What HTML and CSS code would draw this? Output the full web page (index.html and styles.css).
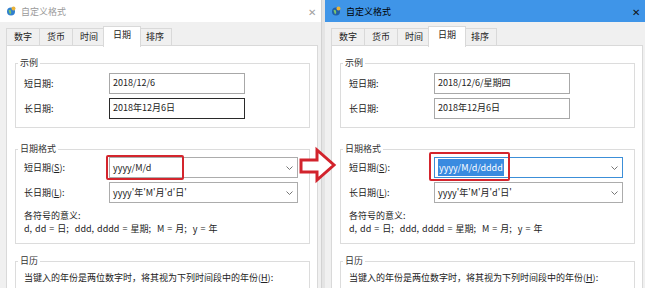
FILE: index.html
```html
<!DOCTYPE html>
<html lang="zh-CN">
<head>
    <meta charset="UTF-8">
    <title>自定义格式</title>
    <link rel="stylesheet" href="styles.css">
</head>
<body>
<div class="screen">
    <div class="window window-left">
        <div class="titlebar">
            <svg class="app-icon" viewBox="0 0 10 10"><circle cx="5" cy="5.5" r="4" fill="#2f7fd0"/><path d="M2.5 4.5 Q4 3 5 5 Q6 7 4 8.5" fill="#7cc36a"/><circle cx="7.5" cy="2.5" r="2" fill="#e9b33a"/></svg>
            <span class="title">自定义格式</span>
            <span class="close">✕</span>
        </div>
        <div class="tabs">
            <span class="tab">数字</span>
            <span class="tab">货币</span>
            <span class="tab">时间</span>
            <span class="tab tab-active">日期</span>
            <span class="tab tab-last">排序</span>
        </div>
        <div class="panel">
            <fieldset class="group">
                <legend>示例</legend>
                <div class="row first">
                    <span class="label">短日期:</span>
                    <div class="textbox">2018/12/6</div>
                </div>
                <div class="row">
                    <span class="label">长日期:</span>
                    <div class="textbox focused">2018年12月6日</div>
                </div>
            </fieldset>
            <fieldset class="group group-format">
                <legend>日期格式</legend>
                <div class="row first-combo">
                    <span class="label">短日期(<u>S</u>):</span>
                    <div class="combo">
                        <span class="value">yyyy/M/d</span>
                        <svg class="chevron" viewBox="0 0 7 4"><path d="M0.5 0.5 L3.5 3.5 L6.5 0.5" fill="none" stroke="#666" stroke-width="0.9"/></svg>
                        <span class="mark mark-left"></span>
                    </div>
                </div>
                <div class="row">
                    <span class="label">长日期(<u>L</u>):</span>
                    <div class="combo">
                        <span class="value">yyyy'年'M'月'd'日'</span>
                        <svg class="chevron" viewBox="0 0 7 4"><path d="M0.5 0.5 L3.5 3.5 L6.5 0.5" fill="none" stroke="#666" stroke-width="0.9"/></svg>
                    </div>
                </div>
                <div class="notes">
                    <div>各符号的意义:</div>
                    <div class="legend-line">d, dd = 日;&nbsp; ddd, dddd = 星期;&nbsp; M = 月;&nbsp; y = 年</div>
                </div>
            </fieldset>
            <fieldset class="group group-calendar">
                <legend>日历</legend>
                <div class="notes calendar-text">当键入的年份是两位数字时，将其视为下列时间段中的年份(<u>H</u>):</div>
            </fieldset>
        </div>
    </div>

    <div class="window window-right">
        <div class="titlebar">
            <svg class="app-icon" viewBox="0 0 10 10"><circle cx="5" cy="5.5" r="4" fill="#1f5fa8"/><path d="M2.5 4.5 Q4 3 5 5 Q6 7 4 8.5" fill="#7cc36a"/><circle cx="7.5" cy="2.5" r="2" fill="#e9b33a"/></svg>
            <span class="title">自定义格式</span>
            <span class="close">✕</span>
        </div>
        <div class="tabs">
            <span class="tab">数字</span>
            <span class="tab">货币</span>
            <span class="tab">时间</span>
            <span class="tab tab-active">日期</span>
            <span class="tab tab-last">排序</span>
        </div>
        <div class="panel">
            <fieldset class="group">
                <legend>示例</legend>
                <div class="row first">
                    <span class="label">短日期:</span>
                    <div class="textbox">2018/12/6/星期四</div>
                </div>
                <div class="row">
                    <span class="label">长日期:</span>
                    <div class="textbox">2018年12月6日</div>
                </div>
            </fieldset>
            <fieldset class="group group-format">
                <legend>日期格式</legend>
                <div class="row first-combo">
                    <span class="label">短日期(<u>S</u>):</span>
                    <div class="combo combo-focus">
                        <span class="value"><span class="selected">yyyy/M/d/dddd</span></span>
                        <svg class="chevron" viewBox="0 0 7 4"><path d="M0.5 0.5 L3.5 3.5 L6.5 0.5" fill="none" stroke="#666" stroke-width="0.9"/></svg>
                        <span class="mark mark-right"></span>
                    </div>
                </div>
                <div class="row">
                    <span class="label">长日期(<u>L</u>):</span>
                    <div class="combo">
                        <span class="value">yyyy'年'M'月'd'日'</span>
                        <svg class="chevron" viewBox="0 0 7 4"><path d="M0.5 0.5 L3.5 3.5 L6.5 0.5" fill="none" stroke="#666" stroke-width="0.9"/></svg>
                    </div>
                </div>
                <div class="notes">
                    <div>各符号的意义:</div>
                    <div class="legend-line">d, dd = 日;&nbsp; ddd, dddd = 星期;&nbsp; M = 月;&nbsp; y = 年</div>
                </div>
            </fieldset>
            <fieldset class="group group-calendar">
                <legend>日历</legend>
                <div class="notes calendar-text">当键入的年份是两位数字时，将其视为下列时间段中的年份(<u>H</u>):</div>
            </fieldset>
        </div>
    </div>

    <!-- arrow between the two dialogs -->
    <svg class="arrow" viewBox="0 0 40 38">
        <path d="M3 14 H19 V4 L36 19 L19 34 V26 H3 Z" fill="#fff" stroke="#d2232c" stroke-width="3" stroke-linejoin="miter"/>
    </svg>
</div>
</body>
</html>
```

FILE: styles.css
```css
* {
    box-sizing: border-box;
}
body {
    margin: 0;
    width: 645px;
    height: 288px;
    overflow: hidden;
    font-family: "Noto Sans CJK SC", sans-serif;
    font-size: 9px;
    color: #222;
    background: #e4e4e4;
}
.screen {
    position: relative;
    display: flex;
    height: 288px;
}
.window {
    background: #f0f0f0;
    overflow: hidden;
}
.window-left {
    width: 322px;
    border-right: 1px solid #d2d2d2;
}
.window-right {
    width: 320px;
    margin-left: 3px;
}
.titlebar {
    height: 22px;
    display: flex;
    align-items: center;
    padding: 0 5px 0 6px;
    background: #fff;
}
.window-right .titlebar {
    background: #3f95e8;
}
.app-icon {
    width: 10px;
    height: 10px;
    margin-right: 5px;
}
.title {
    flex: 1;
    color: #9a9a9a;
}
.window-right .title {
    color: #000;
}
.close {
    font-size: 10px;
    color: #a0a0a0;
}
.window-right .close {
    color: #111;
}
.tabs {
    display: flex;
    height: 23px;
    padding: 6px 0 0 6px;
}
.tab {
    position: relative;
    width: 33px;
    height: 17px;
    line-height: 15px;
    text-align: center;
    border: 1px solid #d9d9d9;
    border-right: none;
    border-bottom: none;
    background: #f0f0f0;
}
.tab-last {
    border-right: 1px solid #d9d9d9;
}
.tab-active {
    z-index: 1;
    width: 38px;
    height: 21px;
    margin: -2px -2px 0 -2px;
    line-height: 16px;
    background: #fff;
    border-right: 1px solid #d9d9d9;
}
.tab-active + .tab {
    border-left: none;
}
.panel {
    height: 270px;
    margin: 0 3px 0 6px;
    padding: 10px 7px 0 8px;
    background: #fff;
    border: 1px solid #d9d9d9;
}
.window-right .panel {
    margin-right: 2px;
}
.group {
    margin: 0;
    padding: 0 0 8px 0;
    border: 1px solid #dcdcdc;
}
.group legend {
    margin-left: 2px;
    padding: 0 2px;
    line-height: 14px;
    color: #333;
}
.group-format {
    margin-top: 14px;
}
.group-calendar {
    margin-top: 10px;
}
.row {
    display: flex;
    align-items: center;
    margin: 4px 0 0 8px;
}
.row.first {
    margin-top: 3px;
}
.row.first-combo {
    margin-top: 1px;
}
.label {
    width: 85px;
}
.textbox {
    width: 136px;
    height: 21px;
    padding: 2px 3px;
    line-height: 14px;
    background: #fff;
    border: 1px solid #a8a8a8;
}
.textbox.focused {
    border-color: #2a2a2a;
}
.combo {
    position: relative;
    display: flex;
    align-items: center;
    width: 189px;
    height: 21px;
    padding: 0 4px 0 3px;
    background: #fff;
    border: 1px solid #acacac;
}
.combo-focus {
    border-color: #3c8fd8;
}
.combo .value {
    flex: 1;
}
.selected {
    padding: 2px 1px;
    background: #3a8be0;
    color: #fff;
}
.chevron {
    width: 7px;
    height: 4px;
}
.mark {
    position: absolute;
    border: 2px solid #d4252d;
    border-radius: 2px;
}
.mark-left {
    left: -4px;
    top: -3px;
    width: 78px;
    height: 25px;
}
.mark-right {
    left: -6px;
    top: -6px;
    width: 81px;
    height: 29px;
}
.notes {
    margin: 6px 0 0 8px;
    line-height: 13px;
}
.legend-line {
    word-spacing: 1px;
}
.calendar-text {
    margin-top: 3px;
    line-height: 14px;
}
.arrow {
    position: absolute;
    left: 298px;
    top: 146px;
    width: 40px;
    height: 38px;
    z-index: 2;
}
```
